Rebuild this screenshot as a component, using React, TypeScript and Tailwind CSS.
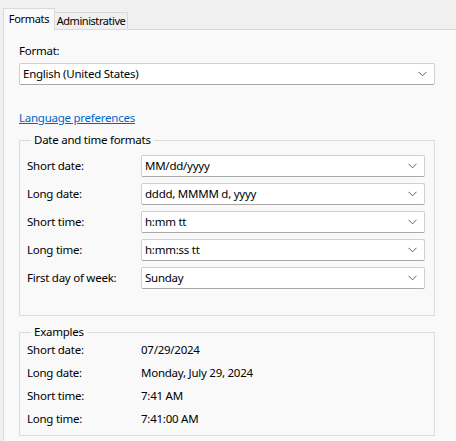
import React from "react";

const Chevron = () => (
  <svg width="9" height="6" viewBox="0 0 9 6" className="shrink-0">
    <path d="M0.5 0.8 L4.5 4.8 L8.5 0.8" fill="none" stroke="#606060" strokeWidth="1" />
  </svg>
);

const Select = ({ value, className = "" }: { value: string; className?: string }) => (
  <div
    className={`h-[22px] flex items-center justify-between bg-white border border-[#d0d0d0] border-b-[#a8a8a8] rounded-[2px] pl-[3px] pr-[7px] ${className}`}
  >
    <span className="leading-[16px]">{value}</span>
    <Chevron />
  </div>
);

const formats: [string, string][] = [
  ["Short date:", "MM/dd/yyyy"],
  ["Long date:", "dddd, MMMM d, yyyy"],
  ["Short time:", "h:mm tt"],
  ["Long time:", "h:mm:ss tt"],
  ["First day of week:", "Sunday"],
];

const examples: [string, string][] = [
  ["Short date:", "07/29/2024"],
  ["Long date:", "Monday, July 29, 2024"],
  ["Short time:", "7:41 AM"],
  ["Long time:", "7:41:00 AM"],
];

export default function App() {
  return (
    <div
      className="w-[456px] h-[441px] bg-[#f0f0f0] overflow-hidden text-[11.5px] tracking-[-0.25px] leading-[16px] text-black"
      style={{ fontFamily: '"Segoe UI", "Noto Sans", sans-serif' }}
    >
      <div className="flex items-end h-[29px] pl-[3px]">
        <div className="relative z-10 -mb-px h-[22px] w-[52px] flex items-start justify-center pt-[2px] bg-[#f9f9f9] border border-b-0 border-[#d9d9d9] text-[11px] tracking-[-0.3px]">
          Formats
        </div>
        <div className="h-[17px] w-[73px] flex items-center justify-center bg-[#f0f0f0] border border-l-0 border-b-0 border-[#d9d9d9] text-[11px] tracking-[-0.45px] whitespace-nowrap">
          Administrative
        </div>
      </div>
      <div className="ml-[3px] h-[412px] bg-[#f9f9f9] border-l border-t border-[#d9d9d9] pl-[15px] pr-[21px] pt-[13px] flex flex-col">
        <div>Format:</div>
        <Select value="English (United States)" className="mt-[4px]" />
        <a className="mt-[25px] self-start text-[#0066cc] underline">Language preferences</a>

        <fieldset className="mt-[6px] border border-[#dcdcdc] pl-[7px] pr-[9px] pt-[7px] pb-[26px]">
          <legend className="ml-[4px] px-[3px]">Date and time formats</legend>
          <div className="flex flex-col gap-[6px]">
            {formats.map(([label, value]) => (
              <div key={label} className="flex items-center">
                <div className="w-[114px] shrink-0">{label}</div>
                <Select value={value} className="flex-1" />
              </div>
            ))}
          </div>
        </fieldset>

        <fieldset className="mt-[8px] border border-[#dcdcdc] pl-[7px] pr-[9px] pt-[2px] pb-[8px]">
          <legend className="ml-[4px] px-[3px]">Examples</legend>
          <div className="flex flex-col gap-[7px]">
            {examples.map(([label, value]) => (
              <div key={label} className="flex items-center">
                <div className="w-[114px] shrink-0">{label}</div>
                <div>{value}</div>
              </div>
            ))}
          </div>
        </fieldset>
      </div>
    </div>
  );
}
